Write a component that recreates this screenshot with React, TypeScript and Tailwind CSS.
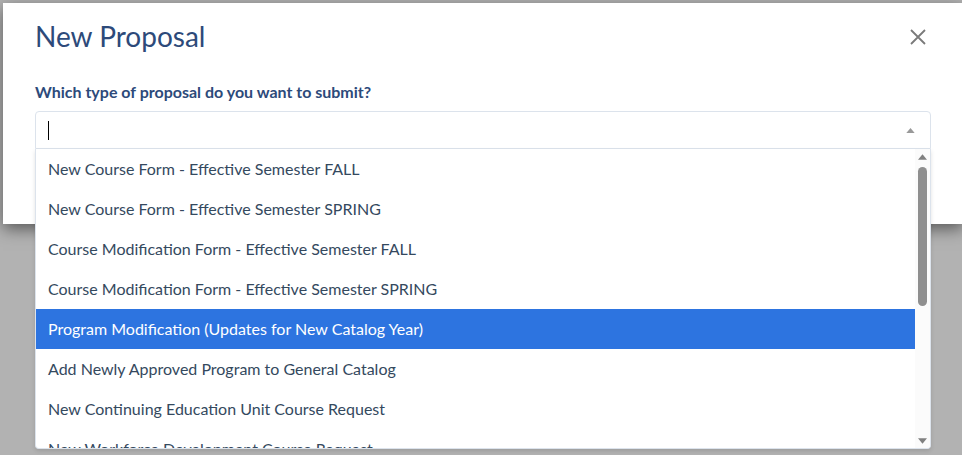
const options = [
    "New Course Form - Effective Semester FALL",
    "New Course Form - Effective Semester SPRING",
    "Course Modification Form - Effective Semester FALL",
    "Course Modification Form - Effective Semester SPRING",
    "Program Modification (Updates for New Catalog Year)",
    "Add Newly Approved Program to General Catalog",
    "New Continuing Education Unit Course Request",
    "New Workforce Development Course Request",
];

const selected = 4;

function Triangle({ up, className }: { up?: boolean; className?: string }) {
    return (
        <svg viewBox="0 0 10 6" className={className}>
            <path d={up ? "M0 6 L5 0 L10 6 Z" : "M0 0 L5 6 L10 0 Z"} fill="currentColor" />
        </svg>
    );
}

function App() {
    return (
        <div className="h-[455px] w-[962px] overflow-hidden bg-[#b2b2b2] pl-[3px] pt-[3px] font-['Lato',sans-serif]">
            <div className="relative h-[221px] w-[960px] bg-white px-8 shadow-[0_5px_15px_rgba(0,0,0,0.5)]">
                <div className="flex items-center justify-between pt-[16px]">
                    <h1 className="text-[28px] leading-[34px] text-[#2d4a7a]">New Proposal</h1>
                    <button className="mr-[5px] mt-[1px] text-[#7a7a7a]">
                        <svg viewBox="0 0 16 16" className="h-[16px] w-[16px]">
                            <path d="M1 1 L15 15 M15 1 L1 15" stroke="currentColor" strokeWidth="1.8" />
                        </svg>
                    </button>
                </div>

                <label className="mt-[29px] block text-[16px] font-bold leading-[20px] text-[#2d4a7a]">
                    Which type of proposal do you want to submit?
                </label>

                <div className="relative mt-[9px]">
                    <div className="flex h-[38px] items-center justify-between rounded-t-[4px] border border-[#dce3ec] pl-[12px] pr-[15px]">
                        <span className="h-[19px] w-px bg-black" />
                        <Triangle up className="h-[5px] w-[9px] text-[#999]" />
                    </div>

                    <div className="absolute left-0 right-0 top-full z-10 flex h-[300px] overflow-hidden rounded-b-[4px] border-x border-b border-[#dce3ec] bg-white shadow-[0_2px_4px_rgba(0,0,0,0.12)]">
                        <ul className="flex-1 overflow-hidden">
                            {options.map((opt, i) => (
                                <li
                                    key={opt}
                                    className={
                                        i === selected
                                            ? "flex h-[40px] items-center bg-[#2d74e0] pl-[12px] text-[16px] text-white"
                                            : "flex h-[40px] items-center pl-[12px] text-[16px] text-[#34495e]"
                                    }
                                >
                                    {opt}
                                </li>
                            ))}
                        </ul>
                        <div className="flex w-[15px] flex-col items-center bg-[#fbfbfb] pb-[4px] pt-[5px]">
                            <Triangle up className="h-[6px] w-[9px] text-[#808080]" />
                            <div className="mt-[7px] h-[139px] w-[9px] rounded-full bg-[#8f8f8f]" />
                            <div className="flex-1" />
                            <Triangle className="h-[6px] w-[9px] text-[#808080]" />
                        </div>
                    </div>
                </div>
            </div>
        </div>
    );
}

export default App;
